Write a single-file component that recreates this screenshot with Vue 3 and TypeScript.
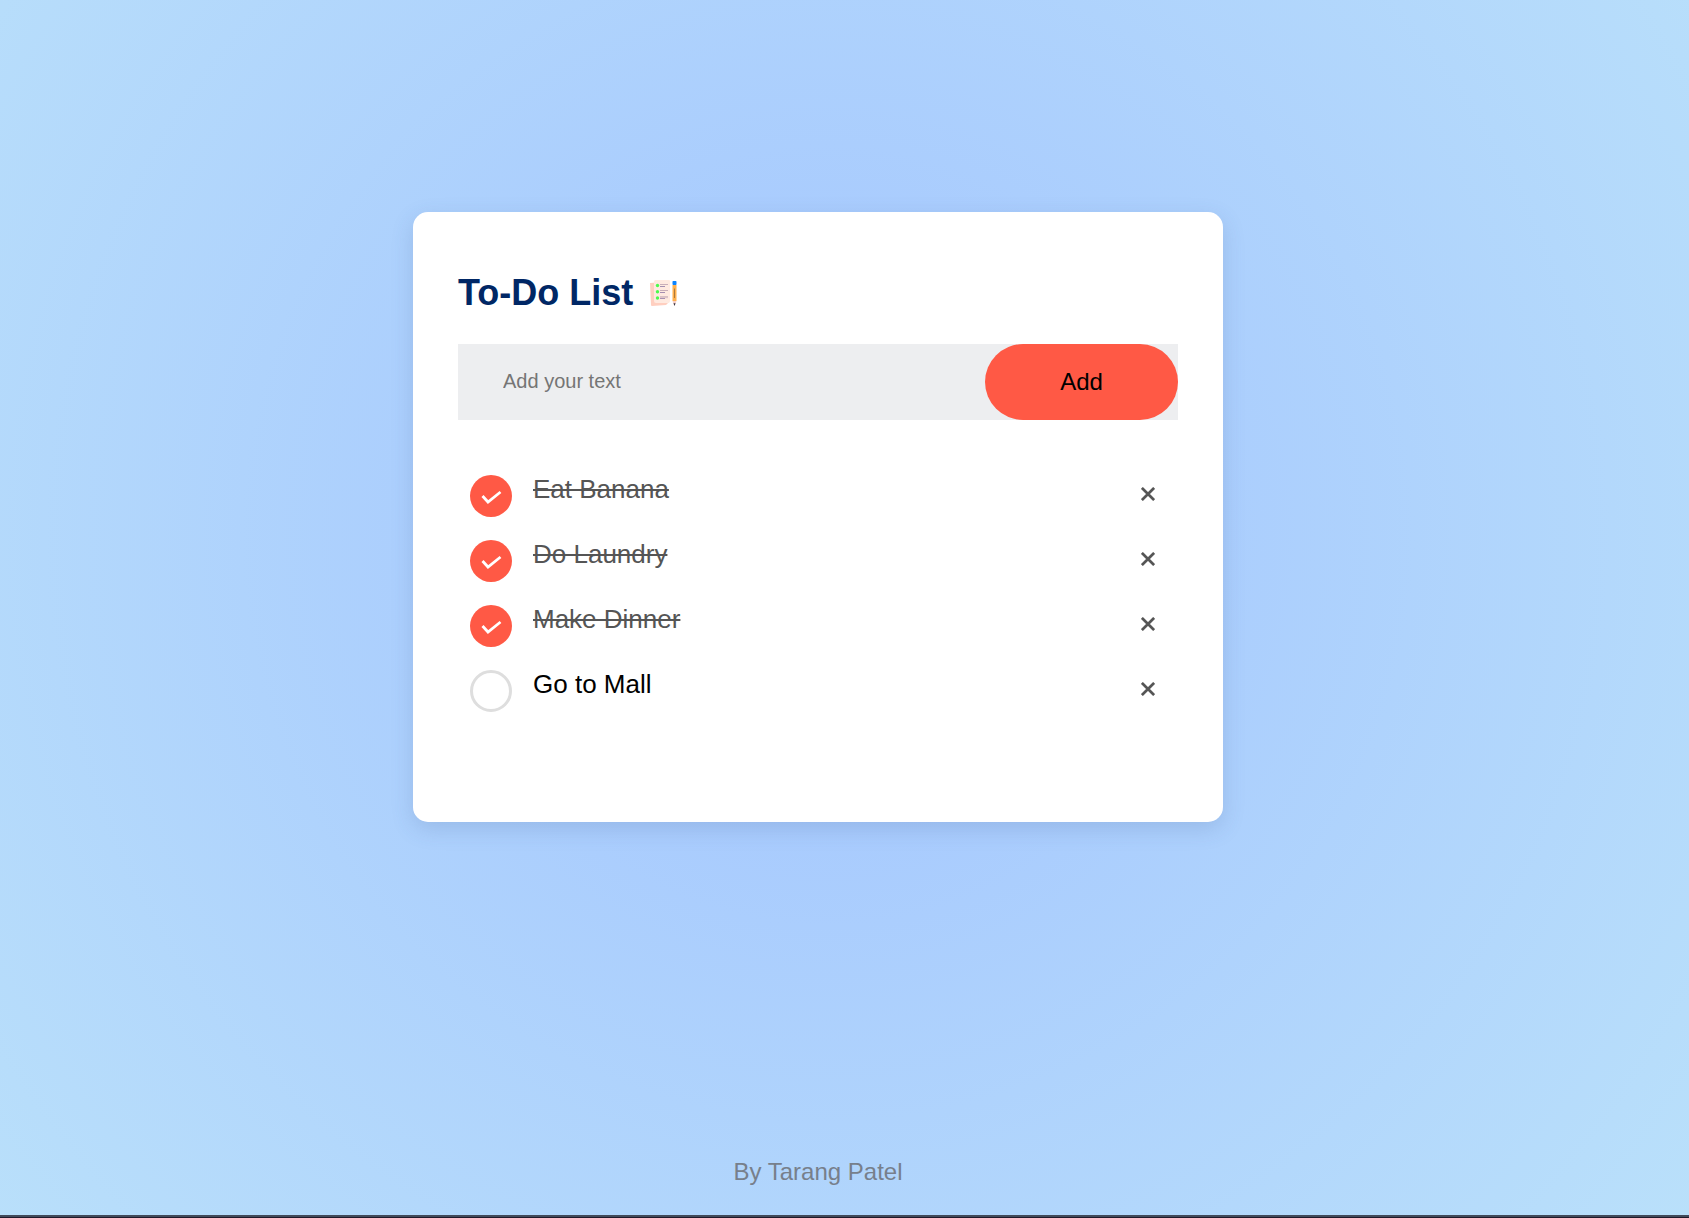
<script setup lang="ts">
import { ref } from 'vue'

interface Task {
  id: number
  text: string
  done: boolean
}

const tasks = ref<Task[]>([
  { id: 1, text: 'Eat Banana', done: true },
  { id: 2, text: 'Do Laundry', done: true },
  { id: 3, text: 'Make Dinner', done: true },
  { id: 4, text: 'Go to Mall', done: false },
])
const draft = ref('')

function addTask() {
  const text = draft.value.trim()
  if (!text) return
  tasks.value.push({ id: Date.now(), text, done: false })
  draft.value = ''
}

function removeTask(id: number) {
  tasks.value = tasks.value.filter((task) => task.id !== id)
}
</script>

<template>
  <div class="page">
    <main class="card">
      <h1 class="title">
        To-Do List
        <svg class="logo" viewBox="0 0 30 30" aria-hidden="true">
          <path d="M2 5 L16 4 L21 24 L18 27 L4 28 Q3 28 3 27 Z" fill="#ffcfc0" />
          <path d="M7 2 H21 Q22 2 22 3 V23 Q22 25 20 25 H8 Q6 25 6 23 V3 Z" fill="#ffeae0" />
          <g fill="#4dfa4d">
            <circle cx="9.500" cy="7.500" r="1.700" />
            <circle cx="9.500" cy="13.700" r="1.700" />
            <circle cx="9.500" cy="20" r="1.700" />
          </g>
          <path d="M12 6.500 H20 M12 12.500 H20 M12 18.800 H20" stroke="#c9afb9" />
          <path d="M12 8.500 H17 M12 14.500 H17 M12 20.500 H17" stroke="#a58fb0" />
          <path d="M12 19.700 H20" stroke="#c9afb9" stroke-width=".6" />
          <rect x="24.500" y="3" width="4" height="4" rx=".7" fill="#0a84ff" />
          <rect x="24.500" y="7" width="4" height="16" fill="#ffb04d" />
          <path d="M26.500 10.500 V20" stroke="#ad7a3c" />
          <path d="M24.500 23 H28.500 L26.500 28 Z" fill="#f6cfc6" />
          <path d="M25.500 25.300 H27.500 L26.500 28 Z" fill="#33303f" />
        </svg>
      </h1>

      <form class="entry" @submit.prevent="addTask">
        <input v-model="draft" class="entry-text" type="text" placeholder="Add your text" aria-label="New task" />
        <button class="entry-add" type="submit">Add</button>
      </form>

      <ul class="tasks">
        <li v-for="task in tasks" :key="task.id" class="task">
          <label class="task-label" :class="{ done: task.done }">
            <input v-model="task.done" class="tick" type="checkbox" />
            <svg class="ring" viewBox="0 0 42 42" aria-hidden="true">
              <template v-if="task.done">
                <circle cx="21" cy="21" r="21" fill="#ff5945" />
                <path d="M12.500 21 L18 27 L30.500 17" fill="none" stroke="#fff" stroke-width="2.800" />
              </template>
              <circle v-else cx="21" cy="21" r="19.500" fill="#fff" stroke="#dedede" stroke-width="3" />
            </svg>
            <span>{{ task.text }}</span>
          </label>
          <button class="remove" type="button" :aria-label="'Delete ' + task.text" @click="removeTask(task.id)">
            <svg viewBox="0 0 14 14" aria-hidden="true">
              <path d="M.9 .9 L13.100 13.100 M13.100 .9 L.9 13.100" stroke="#555" stroke-width="2.700" />
            </svg>
          </button>
        </li>
      </ul>
    </main>
    <footer class="credit">By Tarang Patel</footer>
  </div>
</template>

<style>
body {
  margin: 0;
}
</style>

<style scoped>
.page {
  box-sizing: border-box;
  min-height: 100vh;
  padding: 212px 53px 2px 0;
  display: flex;
  flex-direction: column;
  align-items: center;
  border-bottom: 1px solid #1f1a2a;
  box-shadow: inset 0 -2px 0 #414a5a;
  background: radial-gradient(circle at 49% 44%, #a3c4ff 0%, #bbe2fa 107%);
  font-family: "Liberation Sans", Arial, sans-serif;
}

.card {
  box-sizing: border-box;
  width: 100%;
  max-width: 810px;
  padding: 61px 45px 87px;
  border-radius: 15px;
  background: #fff;
  box-shadow: 0 7px 22px rgba(60, 90, 140, 0.18);
}

.title {
  margin: 0 0 31px;
  display: flex;
  align-items: center;
  gap: 15px;
  color: #002765;
  font-size: 36px;
  line-height: 40px;
}

.logo {
  width: 30px;
  height: 30px;
}

.entry {
  display: flex;
  background: #edeef0;
}

.entry-text {
  flex: 1;
  min-width: 0;
  padding: 0 45px 2px;
  border: 0;
  outline: 0;
  background: transparent;
  font: 20px "Liberation Sans", Arial, sans-serif;
}

.entry-text::placeholder {
  color: #757575;
}

.entry-add {
  width: 193px;
  height: 76px;
  border: 0;
  border-radius: 38px;
  background: #ff5945;
  color: #000;
  font: 24px "Liberation Sans", Arial, sans-serif;
  cursor: pointer;
}

.tasks {
  margin: 55px 0 0;
  padding: 0 23px 0 12px;
  list-style: none;
}

.task {
  height: 65px;
  display: flex;
  justify-content: space-between;
  align-items: flex-start;
}

.task-label {
  position: relative;
  display: flex;
  gap: 21px;
  color: #000;
  font-size: 26px;
  line-height: 28px;
  cursor: pointer;
}

.done {
  color: #555;
  text-decoration: line-through;
}

.tick {
  position: absolute;
  width: 42px;
  height: 42px;
  margin: 0;
  opacity: 0;
}

.ring {
  width: 42px;
  height: 42px;
}

.remove {
  padding: 12px 0;
  border: 0;
  background: none;
  cursor: pointer;
}

.remove svg {
  display: block;
  width: 14px;
  height: 14px;
}

.credit {
  margin: auto 0 29px;
  color: #777f8b;
  font-size: 24px;
  line-height: 28px;
}
</style>
